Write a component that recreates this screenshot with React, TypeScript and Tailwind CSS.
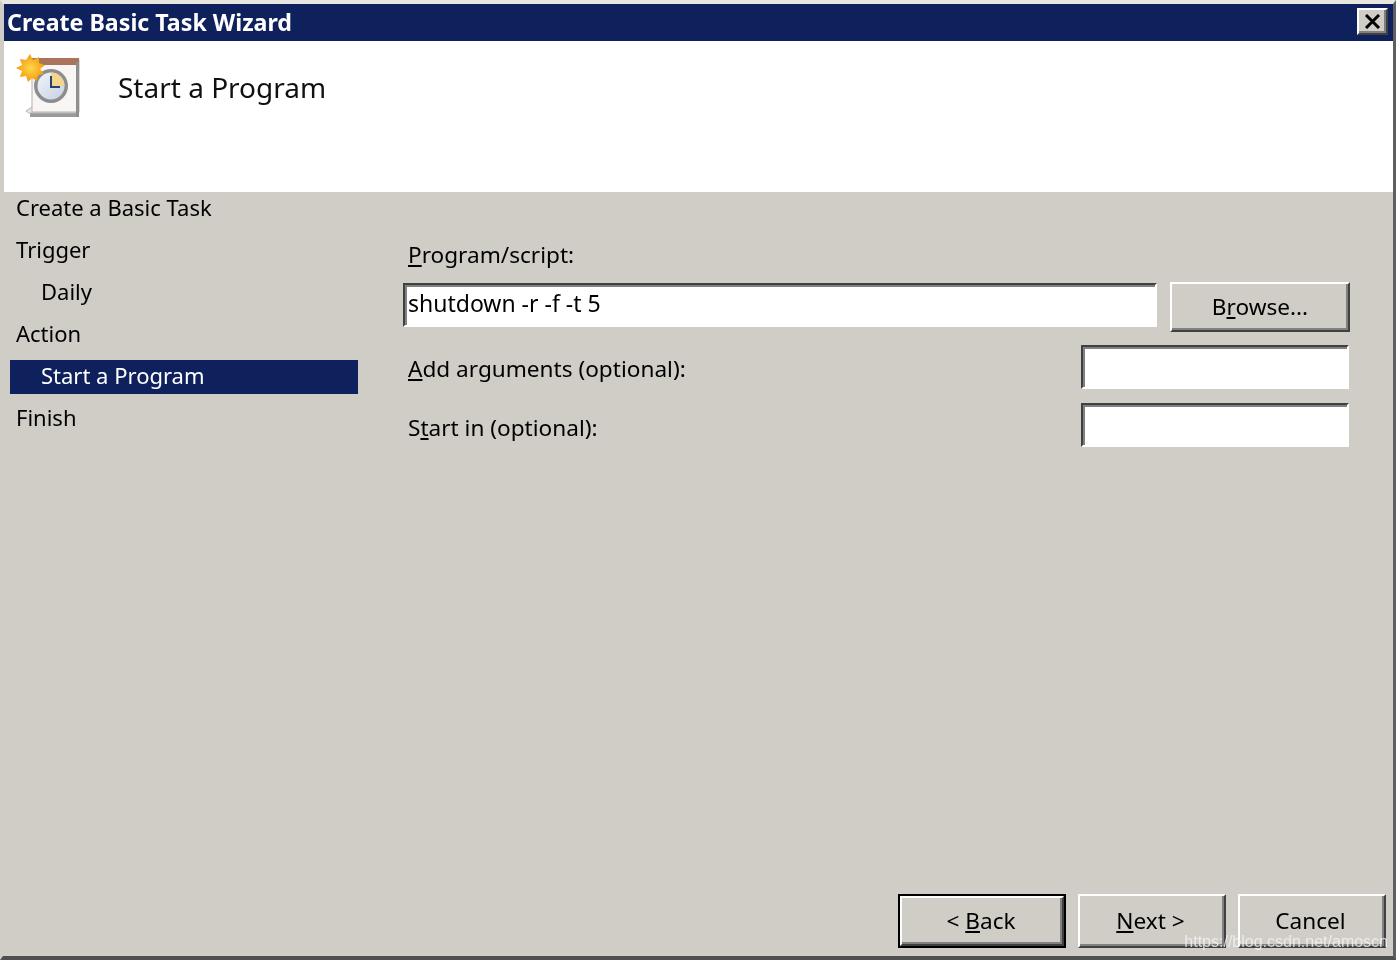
import React from 'react';

const raised = 'border-2 border-t-white border-l-white border-r-[#404040] border-b-[#404040] shadow-[inset_-2px_-2px_0_#808080]';
const sunken = 'border-2 border-t-[#404040] border-l-[#404040] border-r-white border-b-white shadow-[inset_2px_2px_0_#808080]';

const TaskIcon = () => (
  <svg width="66" height="66" viewBox="0 0 66 66" className="shrink-0">
    <defs>
      <radialGradient id="sun" cx="50%" cy="50%" r="50%">
        <stop offset="0%" stopColor="#ffd84a" />
        <stop offset="100%" stopColor="#f39a0c" />
      </radialGradient>
      <linearGradient id="face" x1="0" y1="0" x2="1" y2="1">
        <stop offset="0%" stopColor="#f2f5fb" />
        <stop offset="100%" stopColor="#c5d0e2" />
      </linearGradient>
    </defs>
    <path d="M14 58 L14 63 L63 63 L63 58 Z" fill="#9a9a9a" />
    <path d="M10 57 L16 53 L62 53 L62 59 L13 59 Z" fill="#e6e6e6" stroke="#b5b5b5" />
    <rect x="16" y="6" width="47" height="52" fill="#f8f5f5" stroke="#b9b0b0" />
    <rect x="16" y="4" width="47" height="7" fill="#a9745a" />
    <rect x="60" y="8" width="3" height="55" fill="#8f8f8f" />
    <circle cx="35" cy="32" r="17" fill="#8d8d8d" />
    <circle cx="35" cy="32" r="13.5" fill="url(#face)" />
    <path d="M35 18.5 A13.5 13.5 0 0 1 48.5 32 L35 32 Z" fill="#f3d58c" />
    <path d="M35 22 V33 H44" fill="none" stroke="#27406f" strokeWidth="2" />
    <path
      d="M14 0 L17 6 L23 3 L23 9 L29 11 L24 15 L28 20 L22 21 L21 27 L16 24 L12 28 L10 22 L4 23 L6 17 L0 14 L6 11 L4 5 L10 6 Z"
      fill="url(#sun)"
    />
  </svg>
);

const Step = ({ label, indent, active }: { label: string; indent?: boolean; active?: boolean }) => (
  <div
    className={`h-[34px] w-[348px] flex items-center pb-[4px] text-[22px] ${indent ? 'pl-[31px]' : 'pl-[6px]'} ${
      active ? 'bg-[#0f215c] text-white' : 'text-black'
    }`}
  >
    {label}
  </div>
);

const Button = ({ children, className }: { children: React.ReactNode; className: string }) => (
  <button className={`flex items-center justify-center bg-[#d0cdc6] text-black ${raised} ${className}`}>
    {children}
  </button>
);

export default function App() {
  return (
    <div className="w-[1396px] h-[960px] flex flex-col overflow-hidden relative blur-[0.4px] bg-[#d0cdc6] border-t-[4px] border-l-[3px] border-r-[3px] border-b-[4px] border-t-[#e8e6e0] border-l-[#d0cdc6] border-r-[#5f5f5f] border-b-[#505050] text-[22.6px] font-['Noto_Sans',sans-serif]">
      {/* title bar */}
      <div className="h-[37px] ml-[1px] shrink-0 bg-[#0f215c] flex items-center justify-between pr-[5px]">
        <span className="pl-[3px] text-white font-bold text-[23.2px] leading-none">Create Basic Task Wizard</span>
        <div className={`w-[31px] h-[27px] -mt-[2px] flex items-center justify-center bg-[#d0cdc6] ${raised}`}>
          <svg width="17" height="15" viewBox="0 0 17 15">
            <path d="M2 1 L15 14 M15 1 L2 14" stroke="#000" strokeWidth="3" />
          </svg>
        </div>
      </div>

      {/* header */}
      <div className="h-[151px] ml-[1px] shrink-0 bg-white flex items-start pl-[12px] pt-[13px]">
        <TaskIcon />
        <span className="ml-[36px] mt-[13px] text-[28px] leading-[40px] text-[#111]">Start a Program</span>
      </div>

      {/* body */}
      <div className="flex-1 flex min-h-0 relative">
        <div className="w-[397px] shrink-0 pl-[7px] flex flex-col gap-[8px]">
          <Step label="Create a Basic Task" />
          <Step label="Trigger" />
          <Step label="Daily" indent />
          <Step label="Action" />
          <Step label="Start a Program" indent active />
          <Step label="Finish" />
        </div>

        <div className="flex-1 flex flex-col pt-[47px] pr-[43px] pb-[8px] min-w-0">
          <div className="h-[32px] pl-[8px] flex items-center">
            <span><u>P</u>rogram/script:</span>
          </div>
          <div className="flex items-start gap-[13px] mt-[12px]">
            <div className={`flex-1 ml-[3px] h-[44px] bg-white flex items-center pl-[3px] pb-[4px] text-[23px] ${sunken}`}>
              shutdown -r -f -t 5
            </div>
            <Button className="w-[180px] h-[50px] -mt-[1px]">
              <span>B<u>r</u>owse...</span>
            </Button>
          </div>
          <div className="flex items-center justify-between mt-[13px]">
            <span className="pl-[8px] mt-[4px]"><u>A</u>dd arguments (optional):</span>
            <div className={`w-[268px] h-[44px] mr-[1px] bg-white ${sunken}`} />
          </div>
          <div className="flex items-center justify-between mt-[14px]">
            <span className="pl-[8px] mt-[5px]">S<u>t</u>art in (optional):</span>
            <div className={`w-[268px] h-[44px] mr-[1px] bg-white ${sunken}`} />
          </div>

          <div className="mt-auto flex justify-end gap-[12px] -mr-[36px]">
            <div className="border-[2px] border-black">
              <Button className="w-[164px] h-[50px]">
                <span className="-ml-[2px]">&lt; <u>B</u>ack</span>
              </Button>
            </div>
            <Button className="w-[148px] h-[54px]">
              <span className="-ml-[3px]"><u>N</u>ext &gt;</span>
            </Button>
            <Button className="w-[148px] h-[54px]">
              <span className="-ml-[3px]">Cancel</span>
            </Button>
          </div>
        </div>

        <span className="absolute right-[5px] bottom-[6px] text-[16px] leading-none text-[#f4f4f4]/80 font-['Liberation_Sans',sans-serif]">
          https://blog.csdn.net/amoscn
        </span>
      </div>
    </div>
  );
}
